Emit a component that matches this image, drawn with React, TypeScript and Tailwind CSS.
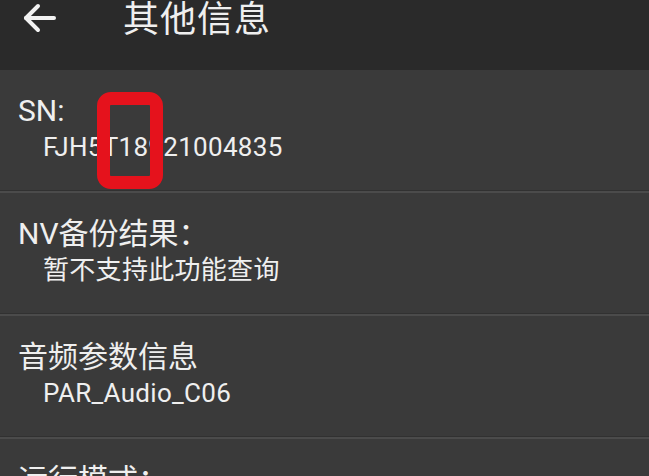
const rows = [
  { title: "SN:", value: "FJH5T18921004835" },
  { title: "NV备份结果：", value: "暂不支持此功能查询" },
  { title: "音频参数信息", value: "PAR_Audio_C06" },
  { title: "运行模式：", value: "" },
];

export default function App() {
  return (
    <div
      className="relative w-[649px] h-[476px] overflow-hidden bg-[#3a3a3a] text-[#efefef]"
      style={{ fontFamily: 'Roboto, "Noto Sans CJK SC", sans-serif' }}
    >
      {/* 顶部标题栏 */}
      <header className="h-[70px] bg-[#2a2a2a] flex items-start">
        <div className="w-[123px] pl-[23px] pt-[2px] h-[34px] flex items-center">
          <svg width="33" height="30" viewBox="0 0 33 30" fill="none" stroke="#f2f2f2" strokeWidth="4" strokeLinecap="round" strokeLinejoin="round">
            <path d="M31 15H3" />
            <path d="M15 3L3 15l12 12" />
          </svg>
        </div>
        <h1 className="text-[36px] leading-[40px] tracking-[1px]">其他信息</h1>
      </header>

      {/* 信息列表 */}
      <div className="flex flex-col">
        {rows.map((row) => (
          <div key={row.title} className="flex flex-col">
            <div className="h-[120px] pl-[18px] pt-[23px]">
              <div className="text-[30px] leading-[36px]">{row.title}</div>
              {row.value && (
                <div className="pl-[25px] text-[26px] leading-[36px] tracking-[0.3px]">{row.value}</div>
              )}
            </div>
            <div className="h-px bg-[#313131]" />
            <div className="h-[2px] bg-[#4b4b4b]" />
          </div>
        ))}
      </div>

      {/* 红色标注框 */}
      <div className="absolute left-[97px] top-[92px] w-[66px] h-[97px] border-[13px] border-[#e5121c] rounded-[14px]" />
    </div>
  );
}
